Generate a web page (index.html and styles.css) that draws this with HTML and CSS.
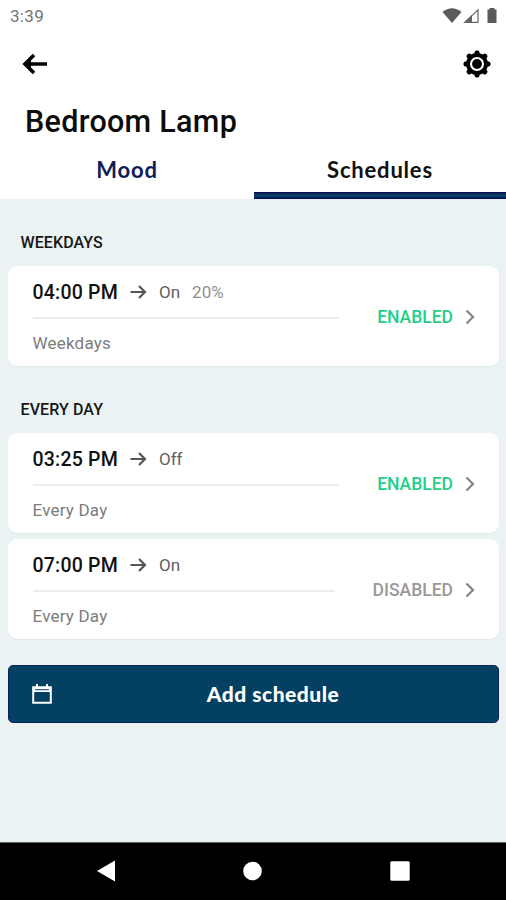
FILE: index.html
```html
<!DOCTYPE html>
<html lang="en">
<head>
<meta charset="utf-8">
<title>Bedroom Lamp</title>
<link rel="stylesheet" href="styles.css">
</head>
<body>
<svg class="sprite" aria-hidden="true">
  <symbol id="arrow" viewBox="0 0 18 16"><path d="M0.500 8h14.500M9 2l6 6-6 6" fill="none" stroke="currentColor" stroke-width="2.200"/></symbol>
  <symbol id="chevron" viewBox="0 0 10 16"><path d="M1.500 1.500L8 8l-6.500 6.500" fill="none" stroke="currentColor" stroke-width="2.200"/></symbol>
</svg>
<div class="screen">
  <header class="header">
    <div class="status-bar">
      <span class="clock">3:39</span>
      <svg class="status-icons" width="56" height="18" viewBox="0 0 56 18">
        <path d="M0.500 4Q10 -3.500 19.500 4L10 15z" fill="#5b5b5b"/>
        <path d="M36 1.800V14.400H22.800z" fill="none" stroke="#666" stroke-width="1.200"/>
        <path d="M21.500 15L30 6.800V15z" fill="#666"/>
        <path d="M47.500 1.500V0h5v1.500h2V15h-9V1.500z" fill="#5b5b5b"/>
      </svg>
    </div>
    <div class="toolbar">
      <svg width="26" height="22" viewBox="0 0 26 22"><path d="M25 11H3M12 2L3 11l9 9" fill="none" stroke="#000" stroke-width="3.600"/><path d="M1 11l8-7v14z"/></svg>
      <svg width="28" height="28" viewBox="-14 -14 28 28">
        <g id="teeth"><rect x="-2.500" y="-13.500" width="5" height="27" rx="2"/><rect x="-13.500" y="-2.500" width="27" height="5" rx="2"/></g>
        <use href="#teeth" transform="rotate(45)"/>
        <circle r="9" fill="#fff" stroke="#000" stroke-width="4"/>
        <circle r="4.900"/>
      </svg>
    </div>
    <h1 class="title">Bedroom Lamp</h1>
    <nav class="tabs">
      <div class="tab">Mood</div>
      <div class="tab tab-active">Schedules</div>
    </nav>
  </header>
  <main class="content">
    <h2 class="group-title">WEEKDAYS</h2>
    <section class="group">
      <article class="card">
        <div class="details">
          <div class="event"><span class="time">04:00 PM</span><svg class="arrow"><use href="#arrow"/></svg><span class="action">On</span><span class="level">20%</span></div>
          <div class="repeat">Weekdays</div>
        </div>
        <span class="state">ENABLED</span><svg class="chevron"><use href="#chevron"/></svg>
      </article>
    </section>
    <h2 class="group-title">EVERY DAY</h2>
    <section class="group">
      <article class="card">
        <div class="details">
          <div class="event"><span class="time">03:25 PM</span><svg class="arrow"><use href="#arrow"/></svg><span class="action">Off</span></div>
          <div class="repeat">Every Day</div>
        </div>
        <span class="state">ENABLED</span><svg class="chevron"><use href="#chevron"/></svg>
      </article>
      <article class="card">
        <div class="details">
          <div class="event"><span class="time">07:00 PM</span><svg class="arrow"><use href="#arrow"/></svg><span class="action">On</span></div>
          <div class="repeat">Every Day</div>
        </div>
        <span class="state state-off">DISABLED</span><svg class="chevron"><use href="#chevron"/></svg>
      </article>
    </section>
    <button class="add">
      <svg width="20" height="20" viewBox="0 0 20 20"><path d="M1.200 3.200h17.600v15.600H1.200zM5 0v5M15 0v5" fill="none" stroke="#fff" stroke-width="2"/><path d="M1 3h18v5H1z" fill="#fff"/><path d="M3 5.700h14" stroke="#034061" stroke-width="1"/></svg>
      <span class="add-label">Add schedule</span>
    </button>
  </main>
  <footer class="nav">
    <svg width="18" height="22" viewBox="0 0 18 22"><path d="M0 11L18 0.500v21z" fill="#fff"/></svg>
    <svg width="19" height="20" viewBox="0 0 19 20"><circle cx="9.500" cy="10" r="9.300" fill="#fff"/></svg>
    <svg width="20" height="20" viewBox="0 0 20 20"><rect x="0.300" y="0.300" width="19.400" height="19.400" rx="1.500" fill="#fff"/></svg>
  </footer>
</div>
</body>
</html>
```

FILE: styles.css
```css
* { box-sizing: border-box; }
body { margin: 0; font-family: Roboto, "Liberation Sans", sans-serif; }
h1, h2 { margin: 0; }
svg { display: block; flex: none; }
.sprite { display: none; }
.screen { width: 506px; height: 900px; display: flex; flex-direction: column; background: #eaf2f4; }
.header { height: 199px; background: #fff; display: flex; flex-direction: column; }
.status-bar { height: 32px; padding: 0 8px 0 10px; display: flex; justify-content: space-between; align-items: center; }
.clock { font-size: 17px; letter-spacing: 0.3px; color: #757575; }
.status-icons { margin-bottom: -2px; }
.toolbar { height: 64px; padding: 0 15px 0 22px; display: flex; justify-content: space-between; align-items: center; }
.title { height: 50px; padding-left: 25px; font-size: 30.5px; line-height: 51px; font-weight: 500; letter-spacing: 0.3px; color: #0c0c0c; }
.tabs { flex: 1; display: grid; grid-template-columns: 254px 1fr; }
.tab { padding-top: 11px; text-align: center; font: bold 22px/26px Lato, sans-serif; letter-spacing: 0.8px; color: #101c58; }
.tab-active { color: #111; background: linear-gradient(#09104e 1px, #083d64 2px, #083d64 5px, #09104e 6px) bottom / 100% 7px no-repeat; }
.content { flex: 1; padding: 0 7px 0 8px; }
.group-title { height: 67px; padding: 33px 0 0 12.5px; font-size: 16px; line-height: 22px; font-weight: 500; letter-spacing: 0.1px; color: #171717; }
.group { display: flex; flex-direction: column; gap: 6px; }
.card { height: 100px; padding: 2px 24px 0 24.5px; display: flex; align-items: center; background: #fff; border-radius: 9px; box-shadow: 0 1px 1px #dfe7ea; }
.details { flex: 1; margin-right: 38px; }
.event { height: 52px; display: flex; align-items: center; border-bottom: 2px solid #ececed; }
.time { width: 97.5px; font-size: 19.5px; font-weight: 500; letter-spacing: 0.2px; color: #111; }
.arrow { width: 18px; height: 16px; color: #555; }
.action { margin-left: 11px; font-size: 17px; color: #606060; }
.level { margin-left: 12px; font-size: 17px; color: #909090; }
.repeat { height: 48px; font-size: 17px; line-height: 48px; letter-spacing: 0.2px; color: #7c7c7c; }
.state { font-size: 17.500px; font-weight: 500; color: #22cf8b; }
.state-off { color: #999; }
.chevron { width: 10px; height: 16px; margin-left: 12px; color: #858585; }
.add { width: 491px; height: 58px; margin-top: 26px; padding: 0 23px; display: flex; align-items: center; border: 1px solid #07265a; border-radius: 5px; background: #034061; color: #fff; }
.add-label { flex: 1; padding-left: 19px; text-align: center; font: 900 21px/26px Lato, sans-serif; letter-spacing: 0.5px; }
.nav { height: 58px; padding: 0 96.500px 2px 97px; display: flex; justify-content: space-between; align-items: center; background: #000; border-top: 1px solid #666; }
```
